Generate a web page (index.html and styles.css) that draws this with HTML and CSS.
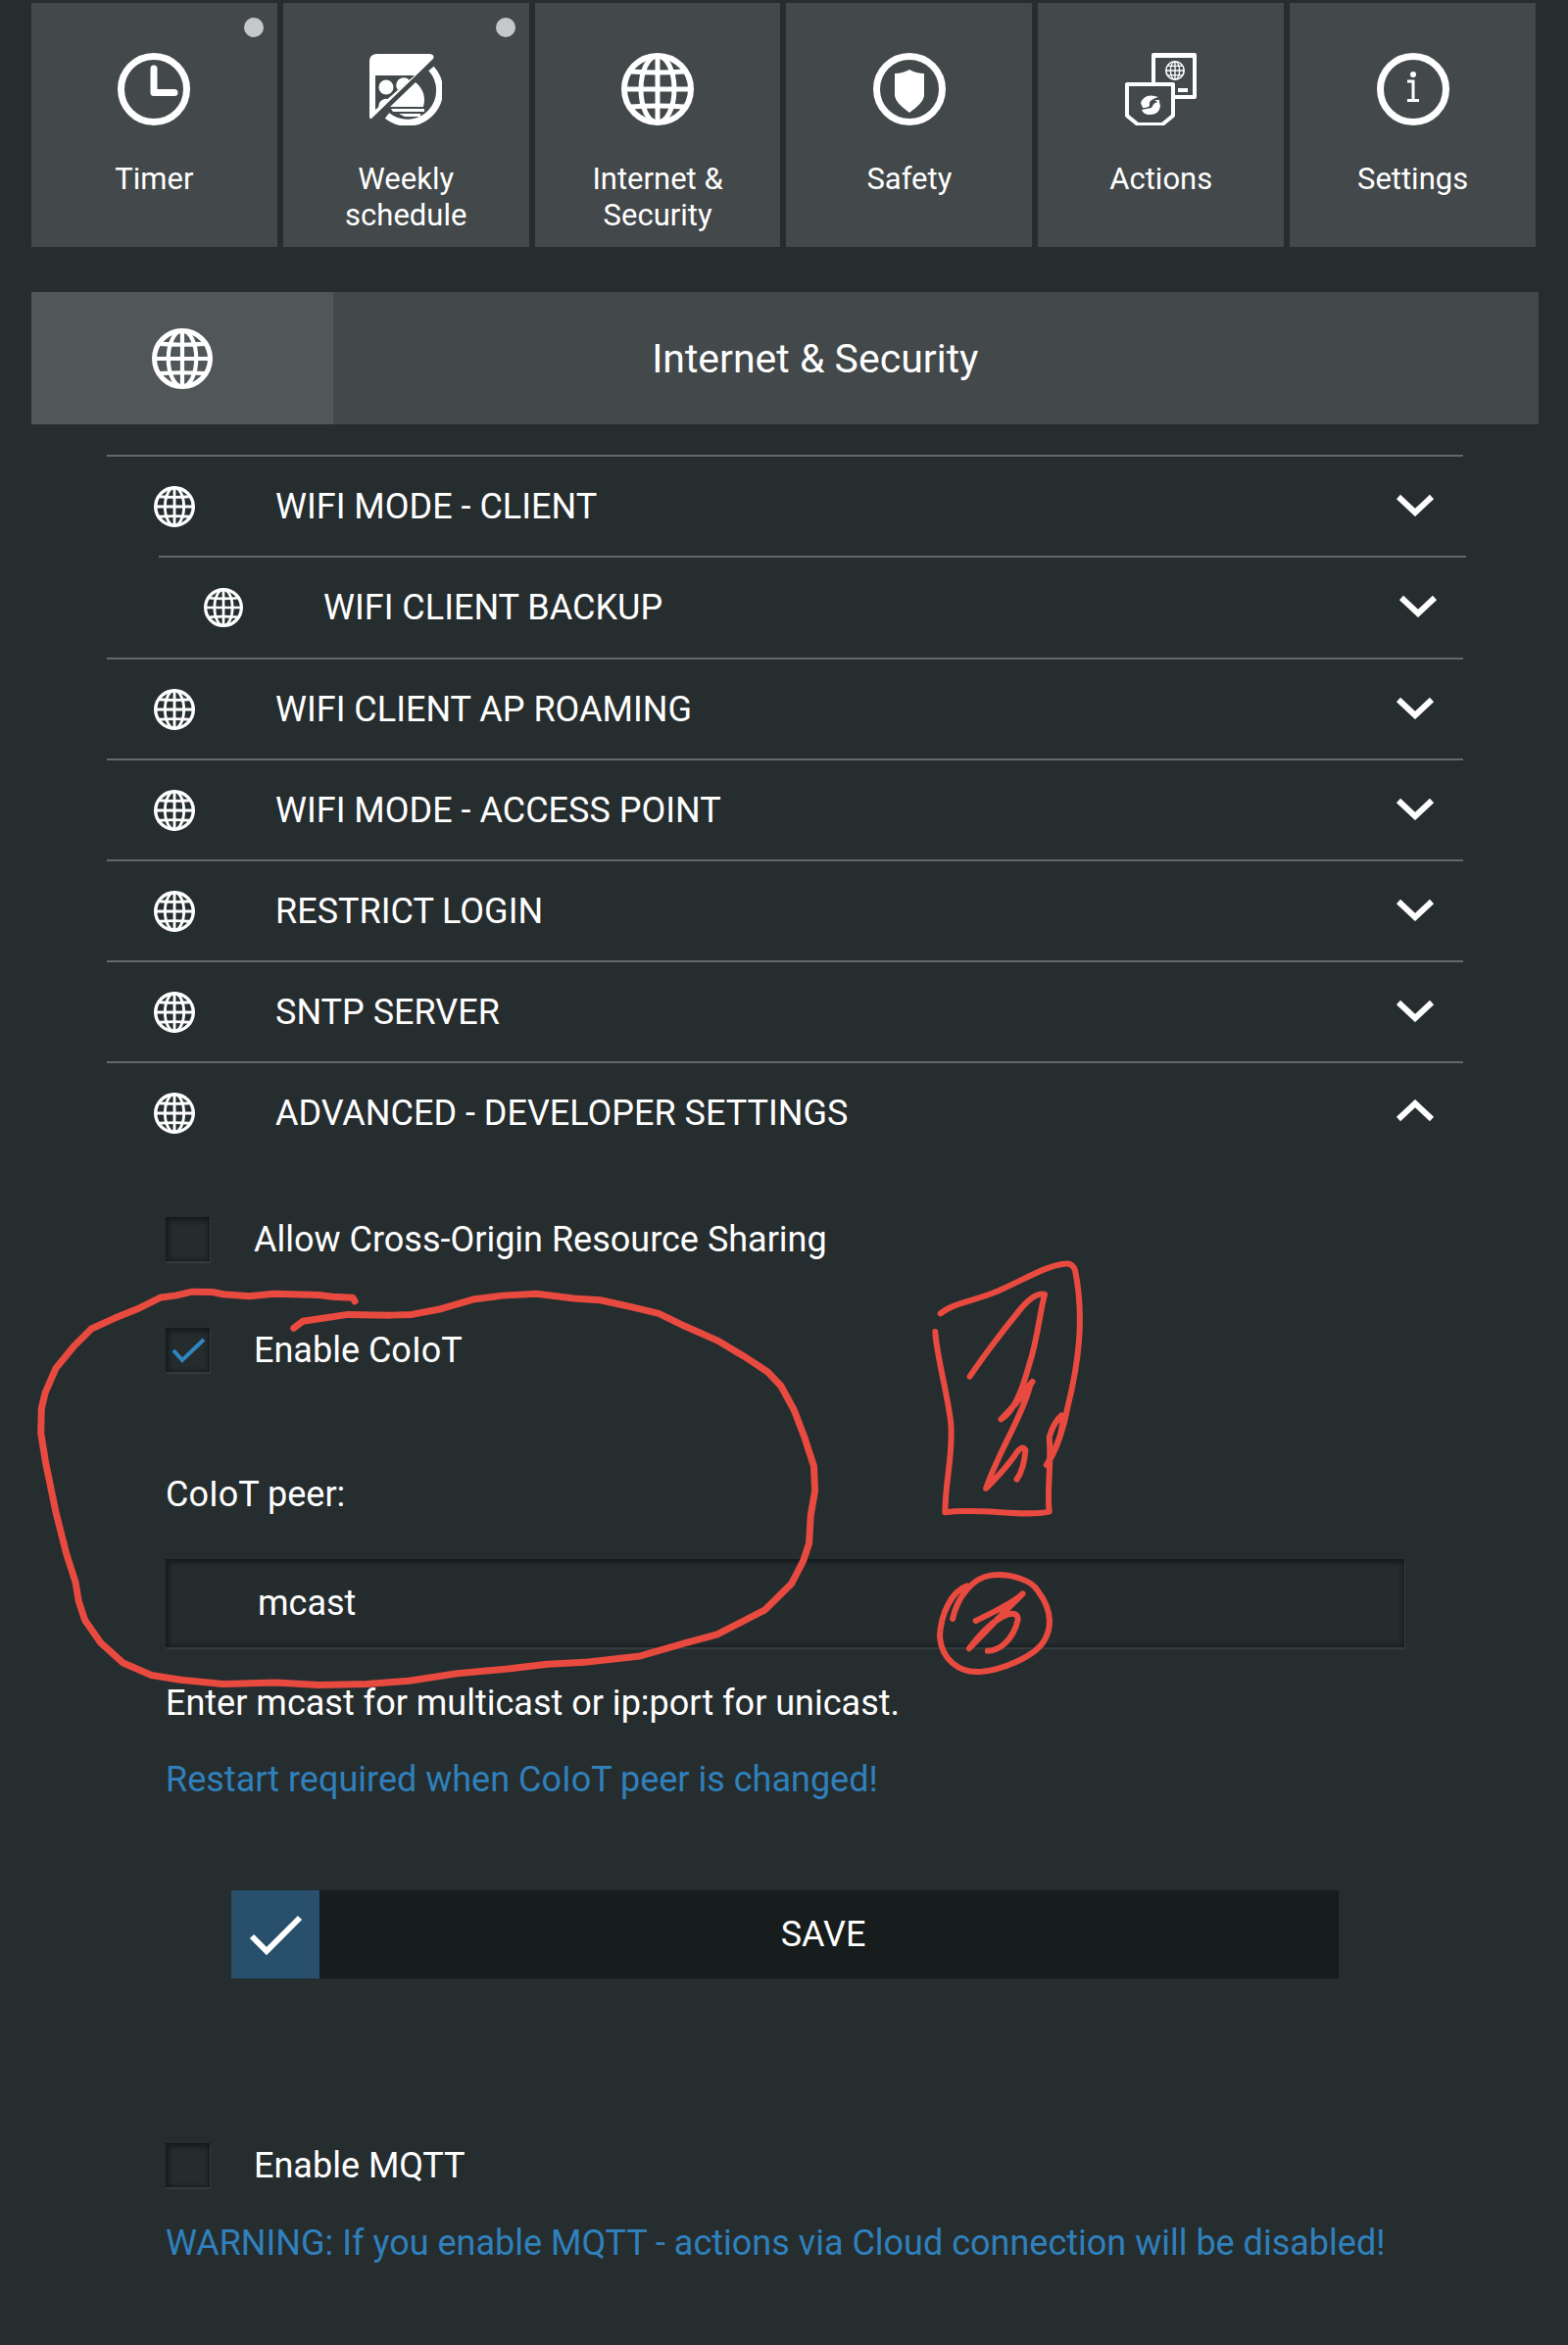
FILE: index.html
```html
<!DOCTYPE html>
<html lang="en">
<head>
<meta charset="utf-8">
<meta name="viewport" content="width=device-width, initial-scale=1">
<title>Internet &amp; Security</title>
<link rel="stylesheet" href="styles.css">
</head>
<body>
<svg class="symbols" aria-hidden="true">
  <symbol id="globe" viewBox="0 0 74 74">
    <g fill="none" stroke="currentColor">
      <circle cx="37" cy="37" r="34" stroke-width="6"/>
      <ellipse cx="37" cy="37" rx="17" ry="34" stroke-width="5"/>
      <path d="M37 3v68M3 37h68" stroke-width="5"/>
      <path d="M10 19q27 2 54 0M10 55q27-2 54 0" stroke-width="5"/>
    </g>
  </symbol>
  <symbol id="chevron" viewBox="0 0 40 24">
    <path d="M3 4l17 16L37 4" fill="none" stroke="currentColor" stroke-width="6"/>
  </symbol>
</svg>
<main class="page">
  <nav class="tiles">
    <a class="tile" href="#timer">
      <span class="dot"></span>
      <svg class="tile-icon" viewBox="0 0 74 74"><circle cx="37" cy="37" r="33.500" fill="none" stroke="currentColor" stroke-width="7"/><path d="M37 16v24.500h21" fill="none" stroke="currentColor" stroke-width="7" stroke-linecap="round" stroke-linejoin="round"/></svg>
      <span>Timer</span>
    </a>
    <a class="tile" href="#weekly">
      <span class="dot"></span>
      <svg class="tile-icon" viewBox="0 0 74 74" fill="currentColor">
        <path fill-rule="evenodd" d="M7 1H62Q67 2 65 6L2 67Q0 68 0 64V8Q0 2 7 1ZM6 23V58L46 23Z"/>
        <circle cx="17" cy="35" r="7.500"/>
        <path d="M29 38a7.500 7.500 0 0 1 12-10zM10 57a7.500 7.500 0 0 1 11-9z"/>
        <path d="M47 30Q59 40 55 55H21ZM22 57H56V60H24ZM30 62H52V65H36Z"/>
        <path d="M63 16A33 33 0 0 1 18 64" fill="none" stroke="currentColor" stroke-width="7"/>
      </svg>
      <span>Weekly schedule</span>
    </a>
    <a class="tile" href="#internet">
      <svg class="tile-icon"><use href="#globe"/></svg>
      <span>Internet &amp; Security</span>
    </a>
    <a class="tile" href="#safety">
      <svg class="tile-icon" viewBox="0 0 74 74"><circle cx="37" cy="37" r="33.500" fill="none" stroke="currentColor" stroke-width="7"/><path d="M37 17q7 4 15 4v23q-1 7-15 17Q23 51 22 44V21q8 0 15-4z" fill="currentColor"/></svg>
      <span>Safety</span>
    </a>
    <a class="tile" href="#actions">
      <svg class="tile-icon" viewBox="0 0 74 74">
        <g fill="none" stroke="currentColor" stroke-width="4" stroke-linejoin="round"><path d="M29 30V2h42v43H51"/><path d="M2 32h47v32l-11 9H13L2 64z"/></g>
        <path d="M29 1h42v4H29z" fill="currentColor"/>
        <path d="M54 38h10" stroke="currentColor" stroke-width="4"/>
        <use href="#globe" x="41" y="8" width="20" height="20"/>
        <path d="M34 45q-14-5-18 6l2 5q5 0 7-2-2-6 9-9z" fill="currentColor"/>
        <path d="M17 58l10-2q3-7 8-6l1 4q-1 10-13 9-4-1-5-3zM30 48l5 0 0 3z" fill="currentColor"/>
      </svg>
      <span>Actions</span>
    </a>
    <a class="tile" href="#settings">
      <svg class="tile-icon" viewBox="0 0 74 74"><circle cx="37" cy="37" r="33.500" fill="none" stroke="currentColor" stroke-width="7"/><circle cx="37" cy="22" r="3" fill="currentColor"/><path d="M31 29h6v19M31 48.500h12" fill="none" stroke="currentColor" stroke-width="3"/></svg>
      <span>Settings</span>
    </a>
  </nav>

  <header class="heading">
    <div class="heading-icon"><svg><use href="#globe"/></svg></div>
    <h1>Internet &amp; Security</h1>
  </header>

  <section class="sections">
    <button class="row" type="button"><svg class="row-icon"><use href="#globe"/></svg><span>WIFI MODE - CLIENT</span><svg class="chevron"><use href="#chevron"/></svg></button>
    <button class="row row-sub" type="button"><svg class="row-icon"><use href="#globe"/></svg><span>WIFI CLIENT BACKUP</span><svg class="chevron"><use href="#chevron"/></svg></button>
    <button class="row" type="button"><svg class="row-icon"><use href="#globe"/></svg><span>WIFI CLIENT AP ROAMING</span><svg class="chevron"><use href="#chevron"/></svg></button>
    <button class="row" type="button"><svg class="row-icon"><use href="#globe"/></svg><span>WIFI MODE - ACCESS POINT</span><svg class="chevron"><use href="#chevron"/></svg></button>
    <button class="row" type="button"><svg class="row-icon"><use href="#globe"/></svg><span>RESTRICT LOGIN</span><svg class="chevron"><use href="#chevron"/></svg></button>
    <button class="row" type="button"><svg class="row-icon"><use href="#globe"/></svg><span>SNTP SERVER</span><svg class="chevron"><use href="#chevron"/></svg></button>
    <button class="row" type="button" aria-expanded="true"><svg class="row-icon"><use href="#globe"/></svg><span>ADVANCED - DEVELOPER SETTINGS</span><svg class="chevron chevron-up"><use href="#chevron"/></svg></button>

    <form class="settings">
      <label class="check"><span class="box"><input type="checkbox"><svg viewBox="0 0 45 45"><path d="M8 23l9 10L39 12"/></svg></span>Allow Cross-Origin Resource Sharing</label>
      <label class="check"><span class="box"><input type="checkbox" checked><svg viewBox="0 0 45 45"><path d="M8 23l9 10L39 12"/></svg></span>Enable CoIoT</label>
      <label class="peer-label" for="peer">CoIoT peer:</label>
      <input class="peer" id="peer" type="text" value="mcast">
      <p class="hint">Enter mcast for multicast or ip:port for unicast.</p>
      <p class="note">Restart required when CoIoT peer is changed!</p>
      <button class="save" type="button">
        <span class="save-icon"><svg viewBox="0 0 90 90"><path d="M21 47l15 15L70 28" fill="none" stroke="currentColor" stroke-width="6"/></svg></span>
        <span class="save-text">SAVE</span>
      </button>
      <label class="check"><span class="box"><input type="checkbox"><svg viewBox="0 0 45 45"><path d="M8 23l9 10L39 12"/></svg></span>Enable MQTT</label>
      <p class="note">WARNING: If you enable MQTT - actions via Cloud connection will be disabled!</p>
    </form>
  </section>

  <svg class="markup" viewBox="0 0 1600 2393" aria-hidden="true">
    <g class="loop" transform="translate(0 1200) scale(.5421 .3571)">
      <path d="M668 358L664 348 625 345 600 340 515 337 470 344 420 338 400 332 362 331 330 342 303 347 262 378 215 407 172 437 140 485 105 550 85 620 78 665 77 735 86 820 105 960 125 1080 142 1160 148 1215 160 1270 190 1335 232 1392 285 1427 340 1440 420 1452 520 1448 600 1455 690 1452 770 1443 860 1422 960 1408 1030 1395 1100 1390 1205 1372 1290 1335 1350 1310 1440 1240 1490 1165 1512 1100 1523 1050 1526 970 1534 900 1532 830 1515 750 1495 670 1470 600 1445 560 1400 515 1350 470 1290 430 1240 393 1190 375 1130 355 1080 350 1010 337 945 342 890 353 830 380 775 396 735 398 655 396 570 415 553 435"/>
    </g>
    <g transform="translate(900 1260) scale(.3571 .3333)">
      <path d="M152 297C156 370 190 500 197 580C203 680 182 740 180 850C280 835 400 865 478 848C470 780 485 720 478 620Q490 575 513 553L516 575Q510 640 470 705"/>
      <path d="M167 241C210 205 280 200 340 168C410 135 470 95 520 89Q545 85 552 110C580 260 560 400 530 530Q515 620 478 690"/>
      <path d="M251 434Q310 340 400 222Q440 175 465 183C450 240 445 320 420 400Q385 540 340 565Q395 505 430 450L380 520Q405 480 425 455C400 560 330 670 297 777Q350 720 380 675Q400 640 410 660Q405 720 385 749"/>
      <path d="M202 1176C215 1110 260 1050 310 1043C370 1035 430 1060 445 1090C480 1140 490 1190 465 1240C440 1290 340 1335 280 1338C220 1342 170 1300 165 1230C168 1160 200 1090 243 1075"/>
      <path d="M268 1182C320 1155 380 1125 402 1099Q340 1165 249 1267Q310 1180 360 1162Q390 1155 388 1180C375 1240 335 1275 302 1274"/>
    </g>
  </svg>
</main>
</body>
</html>
```
FILE: styles.css
```css
* { box-sizing: border-box; }

body {
  margin: 0;
  background: #262d2f;
  color: #fff;
  font-family: Roboto, "Liberation Sans", sans-serif;
  font-size: 36px;
  line-height: 42px;
}

button, input { font: inherit; color: inherit; }
h1, p { margin: 0; }
svg { display: block; }
.symbols { position: absolute; width: 0; height: 0; }

.page {
  position: relative;
  padding: 3px 30px 68px 32px;
}

/* Navigation tiles */
.tiles {
  display: grid;
  grid-template-columns: repeat(6, 1fr);
  gap: 6px;
  margin-right: 3px;
}
.tile {
  position: relative;
  display: flex;
  flex-direction: column;
  align-items: center;
  gap: 36px;
  min-height: 249px;
  padding: 51px 40px 14px;
  background: #43484a;
  color: inherit;
  font-size: 31px;
  line-height: 37px;
  text-align: center;
  text-decoration: none;
}
.tile-icon { width: 74px; height: 74px; flex: none; }
.dot {
  position: absolute;
  top: 15px;
  right: 14px;
  width: 20px;
  height: 20px;
  border-radius: 50%;
  background: #c5c8c9;
}

/* Section heading */
.heading {
  display: grid;
  grid-template-columns: 1fr 4fr;
  min-height: 135px;
  margin-top: 46px;
  background: #43484a;
}
.heading-icon {
  display: grid;
  place-items: center;
  background: #515659;
}
.heading-icon svg { width: 62px; height: 62px; }
.heading h1 {
  align-self: center;
  padding-right: 246px;
  font-size: 41px;
  font-weight: 400;
  line-height: 48px;
  text-align: center;
}

/* Collapsible rows */
.sections { margin: 31px 77px 0; }
.row {
  display: flex;
  align-items: center;
  gap: 82px;
  width: 100%;
  min-height: 103px;
  padding: 0 29px 0 48px;
  border: 0;
  border-top: 2px solid #62696b;
  background: none;
  text-align: left;
}
.row span { flex: 1; }
.row-sub {
  width: auto;
  min-width: calc(100% - 50px);
  min-height: 104px;
  margin-left: 53px;
  padding-left: 46px;
}
.row-icon { width: 42px; height: 42px; flex: none; }
.row-sub .row-icon { width: 40px; height: 40px; }
.chevron { width: 40px; height: 24px; margin-bottom: 4px; flex: none; }
.chevron-up { rotate: 180deg; }

/* Developer settings */
.settings {
  display: flex;
  flex-direction: column;
  padding: 56px 60px 0;
}
.check {
  display: flex;
  align-items: center;
  gap: 45px;
  min-height: 45px;
}
.check + .check { margin-top: 68px; }
.box { position: relative; width: 45px; height: 45px; }
.box input {
  display: block;
  appearance: none;
  width: 100%;
  height: 100%;
  margin: 0;
}
.box input, .peer {
  border: 0;
  background: #252c2e;
  box-shadow: inset 2px 3px 6px #12181a, inset -1px -1px 4px #181f21, 1px 2px 1px #343b3d;
}
.box svg {
  position: absolute;
  inset: 0;
  fill: none;
  stroke: #2f86c1;
  stroke-width: 4;
  visibility: hidden;
}
.box input:checked + svg { visibility: visible; }
.peer-label { margin-top: 104px; }
.peer {
  width: 100%;
  height: 90px;
  margin-top: 45px;
  padding: 0 94px;
}
.hint { margin-top: 36px; }
.note { margin-top: 36px; color: #3080bc; }
.save {
  display: flex;
  min-height: 90px;
  margin: 92px 67px 168px;
  padding: 0;
  border: 0;
  background: #171c1c;
}
.save-icon { width: 90px; height: 90px; background: #284f6b; }
.save-text {
  flex: 1;
  align-self: center;
  padding-right: 12px;
  text-align: center;
}

/* Pen marks drawn over the page */
.markup {
  position: absolute;
  top: 0;
  left: 0;
  width: 100%;
  pointer-events: none;
}
.markup path {
  fill: none;
  stroke: #e94a3f;
  stroke-width: 6;
  stroke-linecap: round;
  stroke-linejoin: round;
  vector-effect: non-scaling-stroke;
}
.markup .loop path { stroke-width: 7; }
```
